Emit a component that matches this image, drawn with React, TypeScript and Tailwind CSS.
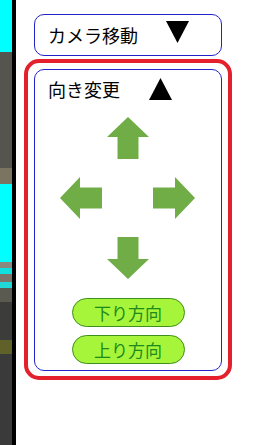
import React from "react";

const font = { fontFamily: '"Noto Sans CJK JP", "Noto Sans", sans-serif' };

function Arrow({ dir }: { dir: "up" | "down" | "left" | "right" }) {
  const rot = { up: 0, right: 90, down: 180, left: 270 }[dir];
  return (
    <svg width="42" height="42" viewBox="0 0 42 42" className="block">
      <path
        d="M21 0 L42 20 L31.5 20 L31.5 42 L10.5 42 L10.5 20 L0 20 Z"
        fill="#70ad47"
        transform={`rotate(${rot} 21 21)`}
      />
    </svg>
  );
}

function Tri({ up }: { up?: boolean }) {
  return (
    <svg width="23" height="22" viewBox="0 0 23 22" className="block">
      <path d={up ? "M11.5 0 L23 22 L0 22 Z" : "M0 0 L23 0 L11.5 22 Z"} fill="#000" />
    </svg>
  );
}

function DirButton({ label }: { label: string }) {
  return (
    <button className="w-[113px] h-[29px] rounded-full border border-[#3f8f1c] bg-[#a6f53a] text-[#1d8a1d] text-[17px] leading-none flex items-center justify-center">
      {label}
    </button>
  );
}

export default function App() {
  return (
    <div className="flex h-[445px] w-[254px] bg-white overflow-hidden" style={font}>
      {/* scene behind the panel */}
      <div className="w-[12px] flex flex-col shrink-0">
        <div className="h-[52px] bg-[#00ffff]" />
        <div className="h-[116px] bg-[#55544e]" />
        <div className="h-[16px] bg-[#7a7460]" />
        <div className="h-[78px] bg-[#00ffff]" />
        <div className="h-[6px] bg-[#8a8a80]" />
        <div className="h-[6px] bg-[#10e0e0]" />
        <div className="h-[8px] bg-[#7c746a]" />
        <div className="h-[6px] bg-[#20d8d8]" />
        <div className="h-[14px] bg-[#5a5a50]" />
        <div className="h-[38px] bg-[#3c3c3a]" />
        <div className="h-[14px] bg-[#5f6128]" />
        <div className="flex-1 bg-[#3a3a3a]" />
      </div>
      <div className="w-[4px] bg-black shrink-0" />

      <div className="flex flex-col pt-[14px]">
        <div className="ml-[18px] w-[188px] h-[42px] border border-[#2323c8] rounded-[10px] flex items-center pl-[13px]">
          <span className="text-[18px] leading-none text-black">カメラ移動</span>
          <span className="ml-[28px] -mt-[6px]">
            <Tri />
          </span>
        </div>

        <div className="mt-[3px] ml-[8px] w-[208px] h-[321px] border-4 border-[#e3202c] rounded-[15px] p-[6px]">
          <div className="h-[302px] border border-[#2323c8] rounded-[10px] flex flex-col items-center">
            <div className="self-start flex items-center pl-[13px] pt-[8px] h-[30px]">
              <span className="text-[18px] leading-none text-black">向き変更</span>
              <span className="ml-[29px]">
                <Tri up />
              </span>
            </div>
            <div className="mt-[17px]">
              <Arrow dir="up" />
            </div>
            <div className="mt-[18px] flex gap-[51px] -ml-[1px]">
              <Arrow dir="left" />
              <Arrow dir="right" />
            </div>
            <div className="mt-[18px]">
              <Arrow dir="down" />
            </div>
            <div className="mt-[19px] flex flex-col gap-[8px]">
              <DirButton label="下り方向" />
              <DirButton label="上り方向" />
            </div>
          </div>
        </div>
      </div>
    </div>
  );
}
